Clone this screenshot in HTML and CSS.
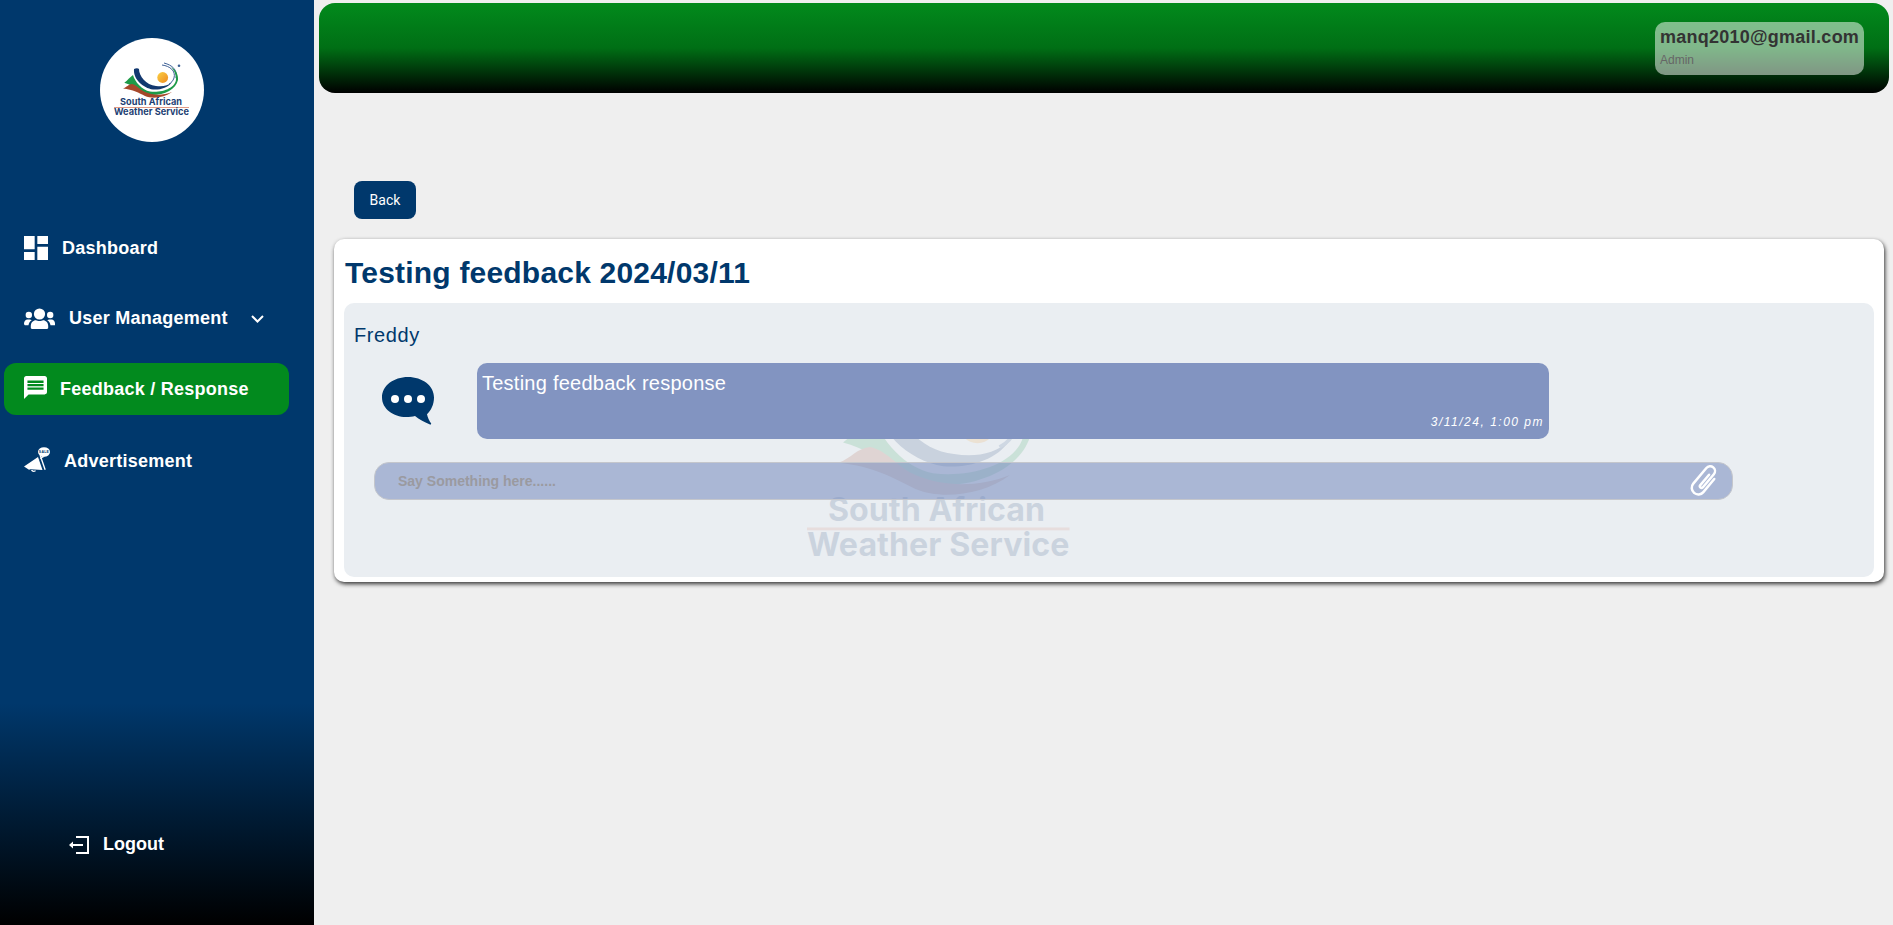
FILE: index.html
```html
<!DOCTYPE html>
<html>

<head>
    <meta charset="utf-8">
    <title>Feedback</title>
    <link rel="stylesheet" href="styles.css">
</head>

<body>
    <svg class="defs" width="0" height="0">
        <defs>
            <linearGradient id="sun" x1="0" y1="0" x2="1" y2="1">
                <stop offset="0" stop-color="#fbd143" />
                <stop offset="1" stop-color="#ee8a22" />
            </linearGradient>
            <symbol id="sawsLogo" viewBox="0 0 104 104">
                <circle cx="62.7" cy="39.5" r="5.4" fill="url(#sun)" />
                <path d="M34 31C36 30 38 30 39 31C39 38 46 47 56 48C62 49 68 48 72 44C68 50 60 52 53 51.500C43 50 33 41 34 31Z" fill="#12386f" />
                <path d="M62 27C70 28 76 33 74 40C73 43 71 45 69 46M64 25C72 27 78 32 76 40" fill="none" stroke="#3c5f95" />
                <path d="M24.300 44.700C28 42 30 39 33 37C35 44 42 52 50 53.500C62 55 76 50 76 41C76 36 74 32 71 29C76 32 78.500 37 78 42C76 51 65 57 52 57C43 56 36 48 24.300 44.700Z" fill="#1e9a48" />
                <path d="M23 50.500C27 49 28 46.500 32 46C37 47 40 52 45 54C52 57 62 58 72 54C64 60 52 61 45 58C39 55 33 51.500 23 50.500Z" fill="#a6482a" />
                <circle cx="79" cy="27.700" r="1.300" fill="#3c5f95" />
                <text class="logoText" x="51" y="67" text-anchor="middle" font-size="9.200" textLength="62">South African</text>
                <rect x="14" y="69" width="75" height="0.8" fill="#d9826a" />
                <text class="logoText" x="51.5" y="77.200" text-anchor="middle" font-size="9.200" textLength="75">Weather Service</text>
            </symbol>
        </defs>
    </svg>

    <div class="page">
        <aside class="sidebar">
            <div class="logoCircle">
                <svg width="104" height="104"><use href="#sawsLogo" /></svg>
            </div>
            <nav class="menu">
                <a class="menuItem">
                    <svg class="iconDash" viewBox="3 3 18 18" width="24" height="24" fill="#fff">
                        <path d="M3 13h8V3H3v10zm0 8h8v-6H3v6zm10 0h8V11h-8v10zm0-18v6h8V3h-8z" />
                    </svg>
                    <span>Dashboard</span>
                </a>
                <a class="menuItem">
                    <svg class="iconUsers" viewBox="0 0 31 22" width="31" height="22" fill="#fff">
                        <circle cx="15.5" cy="6" r="5.6" />
                        <circle cx="4.8" cy="7" r="3.2" />
                        <circle cx="26.2" cy="7" r="3.2" />
                        <path d="M8 21c-.8 0-1.2-.5-1.2-1.2v-2c0-3.4 2.6-5.6 5-5.6 1.2 0 2 .8 3.7.8s2.500-.8 3.700-.8c2.400 0 5 2.200 5 5.600v2c0 .7-.4 1.200-1.200 1.200z" />
                        <path d="M0 15.500c0-2.300 1.500-4 3.500-4h2.200c.8 0 1.400.3 2 .8-2 1.200-3 3.200-3.200 5H1.500C.6 17.300 0 16.700 0 15.500z" />
                        <path d="M31 15.500c0-2.300-1.500-4-3.500-4h-2.200c-.8 0-1.400.3-2 .8 2 1.200 3 3.200 3.200 5h4c.9 0 1.500-.6 1.500-1.800z" />
                    </svg>
                    <span>User Management</span>
                    <svg class="chevron" viewBox="0 0 13 8" width="13" height="8" fill="none" stroke="#fff" stroke-width="2">
                        <path d="M1 1l5.500 5.500L12 1" />
                    </svg>
                </a>
                <a class="menuItem active">
                    <svg class="iconChat" viewBox="2 2 20 20" width="23" height="23" fill="#fff">
                        <path fill-rule="evenodd" d="M20 2H4c-1.100 0-1.990.9-1.990 2L2 22l4-4h14c1.100 0 2-.9 2-2V4c0-1.100-.9-2-2-2zM5 6h14v2H5zm0 3h14v2H5zm0 3h14v2H5z" />
                    </svg>
                    <span>Feedback / Response</span>
                </a>
                <a class="menuItem">
                    <svg class="iconAd" viewBox="0 0 26 26" width="26" height="26" fill="#fff">
                        <path d="M0 19.500L14 10l4.500 13-12-.8-1.500 .5z" />
                        <path d="M15.500 8.500l1.300-.5 5 14.500-1.300.5z" />
                        <path d="M7 23h1.600c.3 1 1.700 1 2.200.2l1.200.6c-1 1.800-4.500 1.500-5-.8z" />
                        <ellipse cx="20" cy="5" rx="6" ry="4.800" />
                        <path d="M18 9l-2.500 3.500 5.500-3z" />
                        <text class="adText" x="20" y="6.300" text-anchor="middle">SALE</text>
                    </svg>
                    <span>Advertisement</span>
                </a>
            </nav>
            <a class="logout">
                <svg viewBox="0 0 20 18" width="20" height="18" fill="none" stroke="#fff" stroke-width="2">
                    <path d="M7 1h12v16H7" />
                    <path d="M3 9h11" />
                    <path d="M0 9l4-3.500v7z" fill="#fff" stroke="none" />
                </svg>
                <span>Logout</span>
            </a>
        </aside>

        <main class="content">
            <header class="topbar">
                <div class="userChip">
                    <div class="userEmail">manq2010@gmail.com</div>
                    <div class="userRole">Admin</div>
                </div>
            </header>

            <button class="backBtn">Back</button>

            <section class="card">
                <h1 class="cardTitle">Testing feedback 2024/03/11</h1>
                <div class="panel">
                    <svg class="watermark" width="364" height="364"><use href="#sawsLogo" /></svg>
                    <div class="senderName">Freddy</div>
                    <div class="messageRow">
                        <svg class="chatIcon" viewBox="0 0 52 48" width="52" height="48">
                            <path fill="#00386c" d="M26 0C11.600 0 0 8.800 0 20.500 0 32 11.600 40 24 40c3.500 0 6.500-.4 9-1 4 3.500 10 6.500 15 8.500.9.300 1.500-.4 1-1.200-1.800-2.600-3.400-6-4-9C49 33.500 52 27.500 52 20.500 52 8.800 40.400 0 26 0z" />
                            <circle cx="13" cy="22" r="4" fill="#fff" />
                            <circle cx="26" cy="22" r="4" fill="#fff" />
                            <circle cx="39" cy="22" r="4" fill="#fff" />
                        </svg>
                        <div class="bubble">
                            <div class="bubbleText">Testing feedback response</div>
                            <div class="bubbleTime">3/11/24, 1:00 pm</div>
                        </div>
                    </div>
                    <div class="replyBox">
                        <input class="replyInput" type="text" placeholder="Say Something here......">
                        <svg class="clipIcon" viewBox="0 0 28 30" width="32" height="34" fill="none" stroke="#fff" stroke-width="2.200" stroke-linecap="round">
                            <path transform="rotate(40 14 15)" d="M18.500 9V24a5.800 5.800 0 0 1-11.600 0V6a4.300 4.300 0 0 1 8.600 0V21a1.500 1.500 0 0 1-3 0V9" />
                        </svg>
                    </div>
                </div>
            </section>
        </main>
    </div>
</body>

</html>
```

FILE: styles.css
```css
* {
    box-sizing: border-box;
}

html,
body {
    margin: 0;
    padding: 0;
    height: 100%;
}

body {
    background: #efefef;
    font-family: "Liberation Sans", Arial, sans-serif;
}

.defs {
    position: absolute;
}

.logoText {
    font-family: Inter, sans-serif;
    font-weight: 700;
    fill: #1e3f73;
}

.adText {
    font-family: "Liberation Sans", Arial, sans-serif;
    font-size: 3.500px;
    font-weight: 700;
    fill: #00386c;
}

.page {
    display: flex;
    height: 925px;
    overflow: hidden;
}

/* sidebar */
.sidebar {
    width: 314px;
    flex-shrink: 0;
    display: flex;
    flex-direction: column;
    padding-bottom: 70px;
    background: linear-gradient(#00386c 0, #00386c 76%, #000 100%);
    color: #fff;
}

.logoCircle {
    width: 104px;
    height: 104px;
    margin: 38px 0 0 100px;
    border-radius: 50%;
    background: #fff;
    overflow: hidden;
}

.menu {
    display: flex;
    flex-direction: column;
    gap: 18.5px;
    margin: 80px 25px 0 4px;
}

.menuItem {
    display: flex;
    align-items: center;
    height: 52px;
    padding-left: 20px;
    border-radius: 12px;
    font-size: 18px;
    font-weight: 700;
    letter-spacing: 0.25px;
}

.menuItem.active {
    margin-bottom: 1.5px;
    background: #028a1e;
}

.iconDash {
    margin-right: 14px;
}

.iconUsers {
    margin-right: 14px;
}

.iconChat {
    margin: -4px 13px 0 0;
}

.iconAd {
    margin: -2px 14px 0 0;
}

.chevron {
    margin-left: 23px;
}

.logout {
    display: flex;
    align-items: center;
    gap: 14px;
    margin: auto 0 0 69px;
    font-size: 18px;
    font-weight: 700;
}

/* main */
.content {
    flex: 1;
    padding: 3px 4px 0 5px;
    min-width: 0;
}

.topbar {
    display: flex;
    justify-content: flex-end;
    align-items: flex-start;
    height: 90px;
    padding: 19px 25px 0 0;
    border-radius: 16px;
    background: linear-gradient(#028a1c, #006f15 50%, #000);
}

.userChip {
    width: 209px;
    height: 53px;
    padding: 3px 5px;
    border-radius: 10px;
    background: rgba(255, 255, 255, 0.5);
}

.userEmail {
    font-size: 18px;
    font-weight: 700;
    line-height: 24px;
    letter-spacing: 0.25px;
    color: #333;
}

.userRole {
    margin-top: 4px;
    font-size: 12px;
    color: #666;
}

.backBtn {
    display: block;
    width: 62px;
    height: 38px;
    margin: 88px 0 0 35px;
    border: 0;
    border-radius: 8px;
    background: #00386c;
    color: #fff;
    font-family: Roboto, sans-serif;
    font-size: 14px;
}

.card {
    margin: 20px 5px 0 15px;
    height: 343px;
    padding: 0 10px 5px;
    display: flex;
    flex-direction: column;
    border-radius: 10px;
    background: #fff;
    box-shadow: 1px 2px 4px #333;
}

.cardTitle {
    margin: 0;
    height: 64px;
    padding: 16px 1px 0;
    font-size: 30px;
    line-height: 36px;
    letter-spacing: 0.2px;
    color: #00386c;
}

.panel {
    position: relative;
    flex: 1;
    padding: 20px 10px 0;
    border-radius: 10px;
    background: #eaeef2;
}

.watermark {
    position: absolute;
    left: 414px;
    top: -17px;
    opacity: 0.15;
}

.senderName {
    position: relative;
    font-size: 20px;
    line-height: 24px;
    letter-spacing: 0.6px;
    color: #00386c;
}

.messageRow {
    position: relative;
    display: flex;
    margin-top: 16px;
}

.chatIcon {
    margin: 14px 0 0 28px;
}

.bubble {
    display: flex;
    flex-direction: column;
    justify-content: space-between;
    width: 1072px;
    height: 76px;
    margin-left: 43px;
    padding: 9px 5px 10px;
    border-radius: 10px;
    background: #8294c1;
    color: #fff;
}

.bubbleText {
    font-size: 20px;
    line-height: 23px;
    letter-spacing: 0.25px;
}

.bubbleTime {
    align-self: flex-end;
    font-size: 12px;
    font-style: italic;
    letter-spacing: 1.5px;
}

.replyBox {
    position: relative;
    display: flex;
    align-items: center;
    width: 1359px;
    height: 38px;
    margin: 23px 0 0 20px;
    padding: 0 10px 0 21px;
    border: 1px solid #c4c6cc;
    border-radius: 15px;
    background: rgba(116, 138, 189, 0.55);
}

.replyInput {
    flex: 1;
    border: 0;
    outline: 0;
    background: transparent;
    font-family: "Liberation Sans", Arial, sans-serif;
    font-size: 14px;
    font-weight: 700;
}

.replyInput::placeholder {
    color: #9a9aa0;
}
```
